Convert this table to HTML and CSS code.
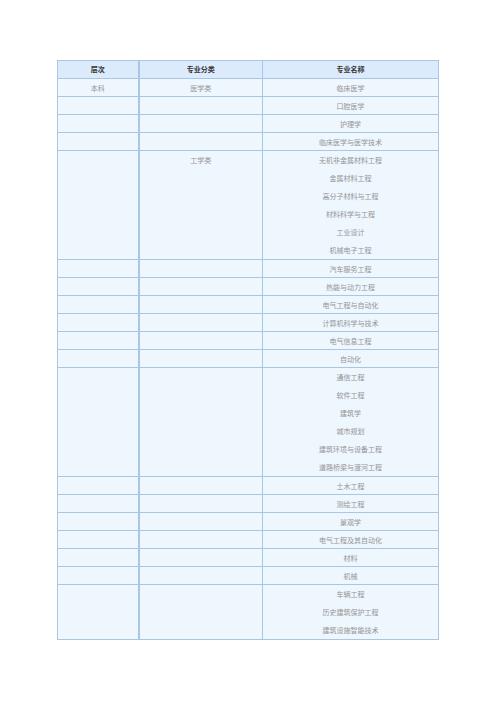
FILE: index.html
```html
<!DOCTYPE html>
<html lang="zh">
<head>
<meta charset="utf-8">
<link rel="stylesheet" href="styles.css">
</head>
<body>
<div class="page">
<table class="majors">
<colgroup><col class="c1"><col class="c2"><col class="c3"></colgroup>
<thead>
<tr><th>层次</th><th>专业分类</th><th>专业名称</th></tr>
</thead>
<tbody>
<tr><td>本科</td><td>医学类</td><td>临床医学</td></tr>
<tr><td></td><td></td><td>口腔医学</td></tr>
<tr><td></td><td></td><td>护理学</td></tr>
<tr><td></td><td></td><td>临床医学与医学技术</td></tr>
<tr class="multi"><td></td><td><div>工学类</div></td><td><div>无机非金属材料工程</div><div>金属材料工程</div><div>高分子材料与工程</div><div>材料科学与工程</div><div>工业设计</div><div>机械电子工程</div></td></tr>
<tr><td></td><td></td><td>汽车服务工程</td></tr>
<tr><td></td><td></td><td>热能与动力工程</td></tr>
<tr><td></td><td></td><td>电气工程与自动化</td></tr>
<tr><td></td><td></td><td>计算机科学与技术</td></tr>
<tr><td></td><td></td><td>电气信息工程</td></tr>
<tr><td></td><td></td><td>自动化</td></tr>
<tr class="multi"><td></td><td></td><td><div>通信工程</div><div>软件工程</div><div>建筑学</div><div>城市规划</div><div>建筑环境与设备工程</div><div>道路桥梁与渡河工程</div></td></tr>
<tr><td></td><td></td><td>土木工程</td></tr>
<tr><td></td><td></td><td>测绘工程</td></tr>
<tr><td></td><td></td><td>景观学</td></tr>
<tr><td></td><td></td><td>电气工程及其自动化</td></tr>
<tr><td></td><td></td><td>材料</td></tr>
<tr><td></td><td></td><td>机械</td></tr>
<tr class="multi"><td></td><td></td><td><div>车辆工程</div><div>历史建筑保护工程</div><div>建筑设施智能技术</div></td></tr>
</tbody>
</table>
</div>
</body>
</html>
```

FILE: styles.css
```css
html, body {
  margin: 0;
  padding: 0;
  background: #ffffff;
}
.page {
  padding: 60px 0 0 57px;
}
.majors {
  border-collapse: collapse;
  table-layout: fixed;
  width: 381px;
  font-family: "Noto Sans CJK SC", "Noto Sans CJK JP", sans-serif;
  font-size: 7px;
  background: #eef6fe;
}
.c1 { width: 81px; }
.c2 { width: 124px; }
.c3 { width: 176px; }
.majors th,
.majors td {
  border: 1px solid #a9c6e6;
  height: 17px;
  padding: 0;
  text-align: center;
  vertical-align: middle;
  line-height: 17px;
  color: #959595;
}
.majors td {
  padding-top: 1px;
  height: 16px;
  line-height: 16px;
}
.majors th {
  background: #dcebfc;
  color: #333333;
  font-weight: bold;
}
.majors th:first-child,
.majors td:first-child {
  border-right: 2px solid #a9c6e6;
}
.majors tr.multi td {
  vertical-align: top;
  padding-top: 1px;
}
.majors tr.multi td div {
  height: 18px;
  line-height: 16px;
}
.majors tr.multi td div:last-child {
  height: 17px;
}
```
